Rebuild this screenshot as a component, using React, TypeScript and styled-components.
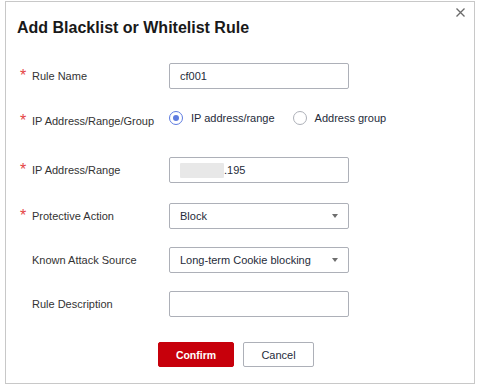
import React from 'react';
import styled, { createGlobalStyle } from 'styled-components';

const GlobalStyle = createGlobalStyle`
  html, body {
    margin: 0;
    padding: 0;
    background: #ffffff;
  }
  body {
    font-family: "Liberation Sans", Arial, sans-serif;
    color: #252b3a;
  }
`;

const Page = styled.div`
  padding: 1px 0 0 5px;
`;

const Dialog = styled.div`
  position: relative;
  width: 470px;
  height: 383px;
  box-sizing: border-box;
  border: 1px solid #c8c8c8;
  background: #ffffff;
  padding: 15px 0 0 11px;
`;

const CloseButton = styled.button`
  position: absolute;
  top: 6px;
  right: 9px;
  width: 9px;
  height: 9px;
  padding: 0;
  border: none;
  background: transparent;
  display: flex;
  cursor: pointer;
`;

const Title = styled.h2`
  margin: 0;
  font-size: 16px;
  line-height: 22px;
  font-weight: bold;
  color: #191919;
`;

const Form = styled.div`
  display: flex;
  flex-direction: column;
  margin-top: 24px;
  padding-left: 3px;
`;

const FormItem = styled.div<{ $mb: number }>`
  display: grid;
  grid-template-columns: 149px 1fr;
  align-items: start;
  margin-bottom: ${(p) => p.$mb}px;
`;

const Label = styled.div`
  display: flex;
  align-items: flex-start;
  font-size: 11px;
  line-height: 26px;
  color: #333333;
  white-space: nowrap;
`;

const Required = styled.span<{ $show: boolean }>`
  width: 12px;
  flex: none;
  color: #e54545;
  font-size: 16px;
  line-height: 26px;
  visibility: ${(p) => (p.$show ? 'visible' : 'hidden')};
`;

const Field = styled.div`
  box-sizing: border-box;
  width: 180px;
  height: 26px;
  border: 1px solid #adb0b8;
  border-radius: 2px;
  padding: 0 10px;
  display: flex;
  align-items: center;
  justify-content: space-between;
  font-size: 11px;
  color: #252b3a;
`;

const Masked = styled.span`
  display: inline-block;
  width: 44px;
  height: 15px;
  background: #e8e8e8;
  border-radius: 1px;
  filter: blur(0.7px);
`;

const Value = styled.span`
  display: flex;
  align-items: center;
`;

const Caret = styled.span`
  width: 0;
  height: 0;
  border-left: 3px solid transparent;
  border-right: 3px solid transparent;
  border-top: 4px solid #6e6e6e;
  margin-right: 0;
`;

const RadioGroup = styled.div`
  display: flex;
  align-items: center;
  height: 20px;
  gap: 18px;
`;

const RadioOption = styled.label`
  display: flex;
  align-items: center;
  gap: 8px;
  font-size: 11px;
  color: #252b3a;
`;

const RadioCircle = styled.span<{ $checked: boolean }>`
  box-sizing: border-box;
  width: 14px;
  height: 14px;
  border-radius: 50%;
  border: 1px solid ${(p) => (p.$checked ? '#5e7ce0' : '#adb0b8')};
  display: flex;
  align-items: center;
  justify-content: center;
  &::after {
    content: '';
    width: 6px;
    height: 6px;
    border-radius: 50%;
    background: #5e7ce0;
    display: ${(p) => (p.$checked ? 'block' : 'none')};
  }
`;

const Footer = styled.div`
  display: flex;
  justify-content: center;
  gap: 9px;
  margin-top: 25px;
  padding-right: 19px;
`;

const Button = styled.button<{ $primary?: boolean }>`
  box-sizing: border-box;
  height: 25px;
  padding: 0;
  width: ${(p) => (p.$primary ? '76px' : '71px')};
  border-radius: 2px;
  font-family: "Liberation Sans", Arial, sans-serif;
  font-size: ${(p) => (p.$primary ? '10.5px' : '11px')};
  font-weight: ${(p) => (p.$primary ? 'bold' : 'normal')};
  color: ${(p) => (p.$primary ? '#ffffff' : '#252b3a')};
  background: ${(p) => (p.$primary ? '#c7000b' : '#ffffff')};
  border: 1px solid ${(p) => (p.$primary ? '#c7000b' : '#adb0b8')};
`;

function Row({
  label,
  required,
  mb,
  children,
}: {
  label: string;
  required?: boolean;
  mb: number;
  children: React.ReactNode;
}) {
  return (
    <FormItem $mb={mb}>
      <Label>
        <Required $show={!!required}>*</Required>
        {label}
      </Label>
      {children}
    </FormItem>
  );
}

export default function App() {
  return (
    <Page>
      <GlobalStyle />
      <Dialog>
        <CloseButton aria-label="close">
          <svg width="9" height="9" viewBox="0 0 9 9">
            <path d="M0.5 0.5 L8.5 8.5 M8.5 0.5 L0.5 8.5" stroke="#6a6a6a" strokeWidth="1.3" />
          </svg>
        </CloseButton>
        <Title>Add Blacklist or Whitelist Rule</Title>
        <Form>
          <Row label="Rule Name" required mb={19}>
            <Field>cf001</Field>
          </Row>
          <Row label="IP Address/Range/Group" required mb={23}>
            <RadioGroup>
              <RadioOption>
                <RadioCircle $checked />
                IP address/range
              </RadioOption>
              <RadioOption>
                <RadioCircle $checked={false} />
                Address group
              </RadioOption>
            </RadioGroup>
          </Row>
          <Row label="IP Address/Range" required mb={20}>
            <Field>
              <Value>
                <Masked />
                .195
              </Value>
            </Field>
          </Row>
          <Row label="Protective Action" required mb={18}>
            <Field>
              Block
              <Caret />
            </Field>
          </Row>
          <Row label="Known Attack Source" mb={18}>
            <Field>
              Long-term Cookie blocking
              <Caret />
            </Field>
          </Row>
          <Row label="Rule Description" mb={0}>
            <Field />
          </Row>
        </Form>
        <Footer>
          <Button $primary>Confirm</Button>
          <Button>Cancel</Button>
        </Footer>
      </Dialog>
    </Page>
  );
}
